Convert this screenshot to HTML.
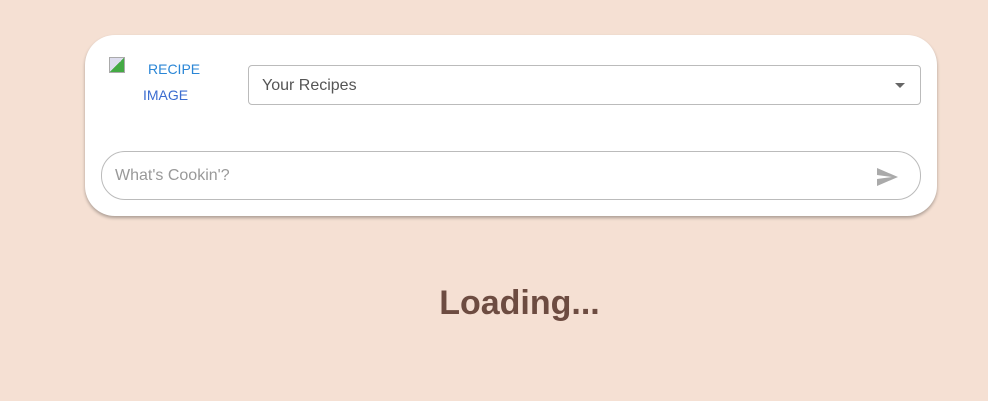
<!DOCTYPE html>
<html><head><style>
body{margin:0;width:988px;height:401px;background:#f5e0d3;font-family:"Liberation Sans",Arial,sans-serif;position:relative;overflow:hidden}
.card{position:absolute;left:85px;top:35px;width:852px;height:181px;background:#fff;border-radius:30px;box-shadow:0 2px 3px rgba(0,0,0,0.3)}
.ic{position:absolute;left:24px;top:22px;width:14px;height:14px;border:1px solid #aaa;background:linear-gradient(135deg,#dde 50%,#4a4 50%)}
.t{position:absolute;font-size:14px;line-height:16px}
.sel{position:absolute;left:163px;top:30px;width:671px;height:38px;border:1px solid #bbb;border-radius:4px}
.sel span{position:absolute;left:13px;top:11px;font-size:16px;color:#555}
.sel i{position:absolute;right:15px;top:17px;border-left:5px solid transparent;border-right:5px solid transparent;border-top:5px solid #666}
.inp{position:absolute;left:16px;top:116px;width:818px;height:47px;border:1px solid #bbb;border-radius:24px}
.inp span{position:absolute;left:13px;top:15px;font-size:16px;color:#999}
.inp svg{position:absolute;right:21px;top:13px}
h1{position:absolute;left:0;width:1039px;top:284px;margin:0;text-align:center;font-size:34px;font-weight:bold;color:#6d4c41}
</style></head><body>
<div class="card">
<div class="ic"></div>
<div class="t" style="left:63px;top:26px;color:#2a86d6">RECIPE</div>
<div class="t" style="left:58px;top:52px;color:#3b6cd0">IMAGE</div>
<div class="sel"><span>Your Recipes</span><i></i></div>
<div class="inp"><span>What's Cookin'?</span><svg width="24" height="24" viewBox="0 0 24 24"><path d="M2.01 21L23 12 2.01 3 2 10l15 2-15 2z" fill="#aaa"/></svg></div>
</div>
<h1>Loading...</h1>
</body></html>
